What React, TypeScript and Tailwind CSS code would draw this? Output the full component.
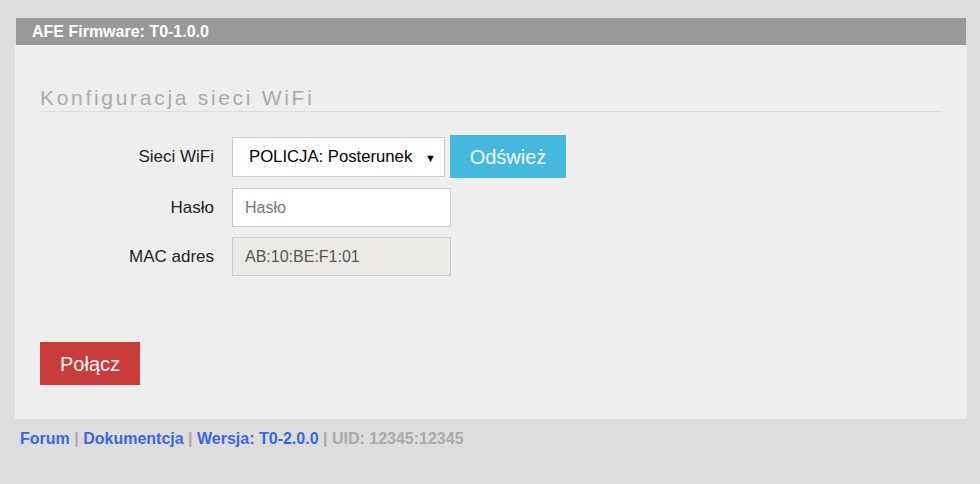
const font = { fontFamily: '"Liberation Sans", Arial, sans-serif' };

function Row({ label, children }: { label: string; children: React.ReactNode }) {
  return (
    <div className="flex items-center">
      <label className="w-[174px] text-right text-[17px] text-[#222]">{label}</label>
      <div className="ml-[18px] flex items-center">{children}</div>
    </div>
  );
}

export default function App() {
  return (
    <div className="min-h-screen bg-[#dddddd] pt-[18px]" style={font}>
      <div className="ml-[15px] w-[952px]">
        {/* Header */}
        <div className="ml-px w-[950px] h-[27px] bg-[#999999] pl-[16px] flex items-center">
          <span className="text-white font-bold text-[16px] leading-none">AFE Firmware: T0-1.0.0</span>
        </div>

        {/* Panel */}
        <div className="bg-[#eeeeee] pt-[41px] pb-[34px] px-[25px]">
          <div className="border-b border-[#dcdcdc] h-[26px]">
            <h2 className="text-[21px] leading-[24px] tracking-[2.7px] text-[#aaaaaa] font-normal">
              Konfiguracja sieci WiFi
            </h2>
          </div>

          <div className="mt-[23px] flex flex-col gap-[10px]">
            <Row label="Sieci WiFi">
              <div className="relative">
                <select
                  className="appearance-none w-[213px] h-[40px] bg-white border border-[#cccccc] pl-[16px] text-[16.7px] text-black outline-none"
                  defaultValue="p"
                >
                  <option value="p">POLICJA: Posterunek</option>
                </select>
                <span className="absolute right-[9px] top-[13px] text-[11px] text-black pointer-events-none">▼</span>
              </div>
              <button className="ml-[5px] w-[116px] h-[43px] bg-[#45b8de] text-[20px] text-[#f4fbff]">Odśwież</button>
            </Row>
            <Row label="Hasło">
              <input
                type="password"
                placeholder="Hasło"
                className="w-[219px] h-[39px] bg-white border border-[#cccccc] px-[12px] text-[16px] placeholder:text-[#777777] outline-none"
              />
            </Row>
            <Row label="MAC adres">
              <input
                readOnly
                value="AB:10:BE:F1:01"
                className="w-[219px] h-[39px] bg-[#ebeae6] border border-[#cccccc] px-[12px] text-[16px] text-[#555555] outline-none"
              />
            </Row>
          </div>

          <button className="mt-[66px] w-[100px] h-[43px] bg-[#c93c3c] text-[20px] text-[#fff6ee]">Połącz</button>
        </div>

        {/* Footer */}
        <div className="mt-[10px] pl-[5px] text-[16px] leading-[20px] font-bold text-[#aaaaaa]">
          <a className="text-[#3d64e4]">Forum</a> | <a className="text-[#3d64e4]">Dokumentcja</a> |{" "}
          <a className="text-[#3d64e4]">Wersja: T0-2.0.0</a> | UID: 12345:12345
        </div>
      </div>
    </div>
  );
}
